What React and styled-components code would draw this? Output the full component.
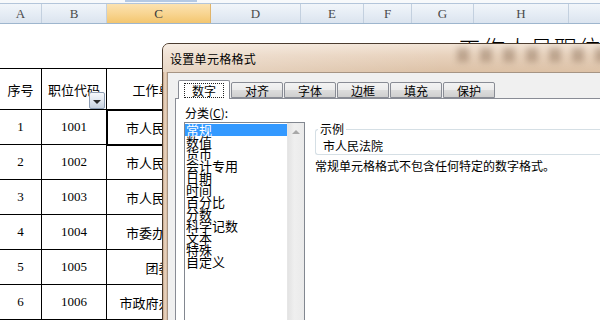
import React from "react";
import styled, { createGlobalStyle } from "styled-components";

const GlobalStyle = createGlobalStyle`
  html, body {
    margin: 0;
    padding: 0;
    background: #fff;
  }
  * {
    box-sizing: border-box;
  }
`;

const COLS = [42, 65, 104, 90, 63, 48, 62, 95, 100];
const LETTERS = ["A", "B", "C", "D", "E", "F", "G", "H", "I"];
const GRID = COLS.map((w) => w + "px").join(" ");

const ROWS = [
  ["1", "1001", "市人民法院"],
  ["2", "1002", "市人民法院"],
  ["3", "1003", "市人民法院"],
  ["4", "1004", "市委办公厅"],
  ["5", "1005", "团委"],
  ["6", "1006", "市政府办公厅"],
];

const CATEGORIES = [
  "常规",
  "数值",
  "货币",
  "会计专用",
  "日期",
  "时间",
  "百分比",
  "分数",
  "科学记数",
  "文本",
  "特殊",
  "自定义",
];

const TABS = ["数字", "对齐", "字体", "边框", "填充", "保护"];

const Screen = styled.div`
  position: relative;
  width: 600px;
  height: 320px;
  overflow: hidden;
  background: #fff;
`;

/* ---------- spreadsheet ---------- */

const Sheet = styled.div`
  display: flex;
  flex-direction: column;
  width: 669px;
  font-family: "Liberation Serif", "Noto Sans CJK SC", serif;
  color: #000;
`;

const TopStrip = styled.div`
  height: 4px;
  border-bottom: 1px solid #b3c5da;
  background: linear-gradient(
        90deg,
        transparent 125px,
        #b4c9e4 125px,
        #b4c9e4 197px,
        transparent 197px
      )
      top / 100% 2px no-repeat,
    #f7f9fb;
`;

const ColHeader = styled.div`
  display: grid;
  grid-template-columns: ${GRID};
  height: 20px;
  border-bottom: 1px solid #9eb6ce;
`;

const ColCell = styled.div`
  display: flex;
  align-items: center;
  justify-content: center;
  font-size: 13px;
  color: ${(p) => (p.$selected ? "#3b3b3b" : "#4a4a4a")};
  border-right: 1px solid ${(p) => (p.$selected ? "#e0b46a" : "#c3d0df")};
  background: ${(p) =>
    p.$selected
      ? "linear-gradient(#fbe2b1, #f8d592 50%, #f3c66f)"
      : "linear-gradient(#f1f5fa, #e6edf5 50%, #dbe4ef)"};
`;

const TitleRow = styled.div`
  height: 44px;
  padding: 10px 0 0 458px;
  font-family: "Noto Sans CJK SC", sans-serif;
  font-weight: 300;
  font-size: 23px;
  line-height: 26px;
  letter-spacing: 1px;
  white-space: nowrap;
`;

const Table = styled.div`
  display: flex;
  flex-direction: column;
  border-top: 1px solid #000;
`;

const Row = styled.div`
  display: grid;
  grid-template-columns: ${GRID};
  height: ${(p) => (p.$head ? 41 : 35)}px;
`;

const Cell = styled.div`
  position: relative;
  display: flex;
  align-items: center;
  justify-content: center;
  border-right: 1px solid #000;
  border-bottom: 1px solid #000;
  font-size: 13px;
  white-space: nowrap;
  overflow: hidden;
  outline: ${(p) => (p.$active ? "2px solid #000" : "none")};
  outline-offset: -1px;
  z-index: ${(p) => (p.$active ? 1 : 0)};
`;

const FilterButton = styled.span`
  position: absolute;
  right: 1px;
  bottom: 0;
  width: 16px;
  height: 17px;
  border: 1px solid #8d9db3;
  border-radius: 2px;
  background: linear-gradient(#f7f9fc, #dfe6ef 55%, #c8d2df);
  display: flex;
  align-items: center;
  justify-content: center;

  &::after {
    content: "";
    border-left: 4px solid transparent;
    border-right: 4px solid transparent;
    border-top: 4px solid #2b2b2b;
    margin-top: 2px;
  }
`;

/* ---------- dialog ---------- */

const Dialog = styled.div`
  position: absolute;
  z-index: 10;
  left: 162px;
  top: 43px;
  width: 470px;
  height: 300px;
  display: flex;
  flex-direction: column;
  border: 1px solid #4b3c2f;
  border-radius: 7px 7px 0 0;
  overflow: hidden;
  font-family: "Noto Sans CJK SC", sans-serif;
  font-size: 12px;
  color: #000;
  background: linear-gradient(90deg, #c3a285 0, #ecd9c6 2px, #d6b89c 4px, #d9bea4 100%);
`;

const TitleBar = styled.div`
  position: relative;
  height: 28px;
  display: flex;
  align-items: center;
  padding-left: 7px;
  background: linear-gradient(90deg, rgba(255, 255, 255, 0.35), rgba(255, 255, 255, 0) 60%),
    linear-gradient(#f2e4d6 0, #e8d2bd 40%, #dcc1a6 100%);
  font-size: 12px;
  letter-spacing: 0.3px;
`;

const Smudge = styled.div`
  position: absolute;
  left: 294px;
  top: 4px;
  width: 170px;
  height: 14px;
  background: repeating-linear-gradient(
    90deg,
    rgba(95, 65, 40, 0.32) 0 12px,
    transparent 12px 23px
  );
  filter: blur(3px);
  pointer-events: none;
`;

const Body = styled.div`
  flex: 1;
  display: flex;
  padding-left: 4px;
`;

const Client = styled.div`
  flex: 1;
  display: flex;
  flex-direction: column;
  border: 1px solid #a69483;
  border-right: none;
  border-bottom: none;
  background: #f0f0f0;
  padding: 7px 0 0 7px;
`;

const TabStrip = styled.div`
  display: flex;
  align-items: flex-end;
  gap: 1px;
  height: 18px;
  padding-left: 3px;
`;

const Tab = styled.div`
  position: relative;
  width: 52px;
  height: ${(p) => (p.$active ? 19 : 16)}px;
  margin-bottom: ${(p) => (p.$active ? -1 : 0)}px;
  z-index: ${(p) => (p.$active ? 1 : 0)};
  display: flex;
  align-items: center;
  justify-content: center;
  border: 1px solid #898c95;
  border-bottom: ${(p) => (p.$active ? "none" : "1px solid #898c95")};
  border-radius: 2px 2px 0 0;
  background: ${(p) =>
    p.$active ? "#fff" : "linear-gradient(#f3f3f3, #ebebeb 50%, #dddddd 50%, #cfcfcf)"};
  font-size: 12px;
  line-height: 13px;
`;

const TabLabel = styled.span`
  padding: 0 7px;
  border: 1px dotted ${(p) => (p.$focus ? "#222" : "transparent")};
`;

const Panel = styled.div`
  flex: 1;
  display: flex;
  gap: 10px;
  border: 1px solid #898c95;
  border-right: none;
  border-bottom: none;
  background: #fff;
  padding: 6px 0 0 8px;
`;

const LeftCol = styled.div`
  display: flex;
  flex-direction: column;
`;

const Label = styled.div`
  line-height: 15px;
  font-size: 12px;
  padding-left: 1px;
  margin-bottom: 2px;

  u {
    text-decoration: underline;
  }
`;

const ListBox = styled.div`
  width: 121px;
  height: 210px;
  display: flex;
  border: 1px solid #828790;
`;

const Items = styled.div`
  flex: 1;
  padding-top: 1px;
`;

const Item = styled.div`
  height: 12px;
  line-height: 12px;
  font-size: 13px;
  padding-left: 1px;
  white-space: nowrap;
  background: ${(p) => (p.$selected ? "#3399ff" : "transparent")};
  color: ${(p) => (p.$selected ? "#fff" : "#000")};
`;

const ScrollBar = styled.div`
  width: 17px;
  background: linear-gradient(90deg, #e3e3e3, #efefef 40%, #eaeaea);
  border-left: 1px solid #e6e6e6;
`;

const ScrollArrow = styled.div`
  height: 17px;
  display: flex;
  align-items: center;
  justify-content: center;

  &::after {
    content: "";
    border-left: 4px solid transparent;
    border-right: 4px solid transparent;
    border-bottom: 4px solid #a8a8a8;
  }
`;

const RightCol = styled.div`
  flex: 1;
  display: flex;
  flex-direction: column;
  padding-top: 18px;
`;

const Group = styled.fieldset`
  margin: 0;
  padding: 4px 7px 1px;
  border: 1px solid #d5dfe5;
  border-right: none;
  border-radius: 3px 0 0 3px;
  min-width: 0;
`;

const Legend = styled.legend`
  margin-left: -5px;
  padding: 0 2px;
  font-size: 12px;
  line-height: 12px;
`;

const Sample = styled.div`
  line-height: 14px;
  font-size: 12px;
`;

const Description = styled.div`
  margin-top: 4px;
  line-height: 14px;
  font-size: 12px;
  white-space: nowrap;
`;

export default function App() {
  return (
    <>
      <GlobalStyle />
      <Screen>
        <Sheet>
          <TopStrip />
          <ColHeader>
            {LETTERS.map((l) => (
              <ColCell key={l} $selected={l === "C"}>
                {l}
              </ColCell>
            ))}
          </ColHeader>
          <TitleRow>工作人员职位表</TitleRow>
          <Table>
            <Row $head>
              <Cell>序号</Cell>
              <Cell>
                职位代码
                <FilterButton />
              </Cell>
              <Cell>工作单位</Cell>
              {COLS.slice(3).map((_, i) => (
                <Cell key={i} />
              ))}
            </Row>
            {ROWS.map((r, ri) => (
              <Row key={r[0]}>
                <Cell>{r[0]}</Cell>
                <Cell>{r[1]}</Cell>
                <Cell $active={ri === 0}>{r[2]}</Cell>
                {COLS.slice(3).map((_, i) => (
                  <Cell key={i} />
                ))}
              </Row>
            ))}
          </Table>
        </Sheet>

        <Dialog>
          <TitleBar>
            <Smudge />
            设置单元格格式
          </TitleBar>
          <Body>
            <Client>
              <TabStrip>
                {TABS.map((t, i) => (
                  <Tab key={t} $active={i === 0}>
                    <TabLabel $focus={i === 0}>{t}</TabLabel>
                  </Tab>
                ))}
              </TabStrip>
              <Panel>
                <LeftCol>
                  <Label>
                    分类(<u>C</u>):
                  </Label>
                  <ListBox>
                    <Items>
                      {CATEGORIES.map((c, i) => (
                        <Item key={c} $selected={i === 0}>
                          {c}
                        </Item>
                      ))}
                    </Items>
                    <ScrollBar>
                      <ScrollArrow />
                    </ScrollBar>
                  </ListBox>
                </LeftCol>
                <RightCol>
                  <Group>
                    <Legend>示例</Legend>
                    <Sample>市人民法院</Sample>
                  </Group>
                  <Description>常规单元格格式不包含任何特定的数字格式。</Description>
                </RightCol>
              </Panel>
            </Client>
          </Body>
        </Dialog>
      </Screen>
    </>
  );
}
